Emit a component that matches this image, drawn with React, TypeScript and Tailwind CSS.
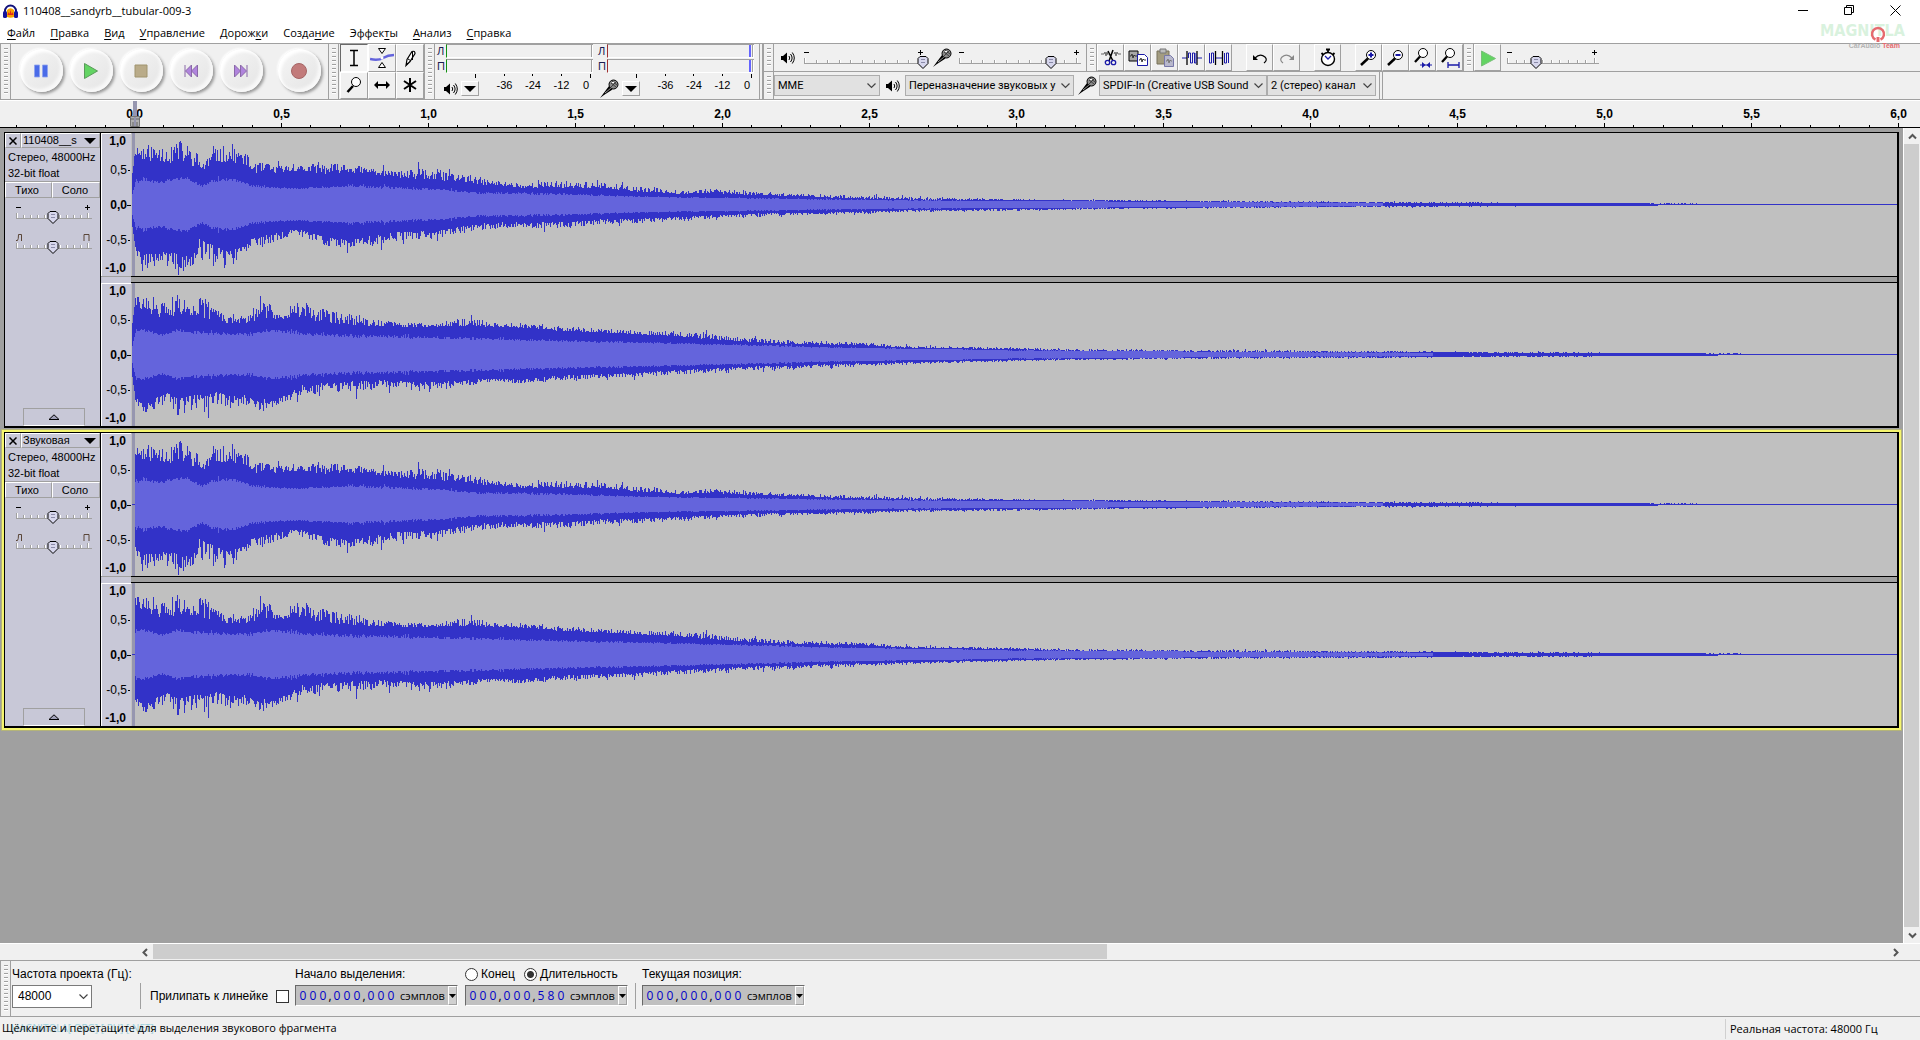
import { useState } from 'react'
import type { ReactNode } from 'react'

const UI = "font-['Open_Sans','Noto_Sans',sans-serif]"
const ARIAL = "font-['Liberation_Sans',Arial,sans-serif]"

// [x, low, high] control points, heights in px from the zero line
type Point = [number, number, number]
type Shape = { up: Point[]; down: Point[]; rms: Point[] }

const LEFT: Shape = {
  up: [
    [0, 30, 34], [3, 50, 58], [12, 42, 60], [25, 44, 60], [40, 40, 57], [45, 44, 66], [60, 38, 58], [70, 32, 46],
    [85, 42, 57], [100, 41, 60], [113, 40, 52], [120, 31, 43], [145, 31, 39], [165, 33, 39], [190, 30, 42],
    [215, 32, 40], [245, 29, 36], [270, 26, 32], [290, 24, 37], [320, 23, 33], [355, 19, 25], [390, 16, 21],
    [430, 16, 24], [470, 15, 21], [510, 12, 17], [550, 10, 14], [580, 11, 15], [620, 9, 13], [650, 8, 11],
    [700, 6, 9], [780, 4, 7], [870, 4, 5], [1000, 3, 4], [1130, 2, 3], [1280, 1, 2], [1460, 1, 1], [1500, 1, 1],
    [1530, 0, 1], [1565, 0, 1], [1566, 0, 0], [1766, 0, 0],
  ],
  down: [
    [0, 22, 24], [3, 42, 45], [10, 49, 67], [30, 46, 58], [42, 48, 68], [50, 50, 66], [60, 52, 66], [67, 33, 56],
    [80, 40, 56], [95, 46, 66], [105, 44, 56], [112, 40, 48], [120, 32, 40], [130, 29, 42], [145, 27, 36],
    [163, 24, 29], [180, 28, 36], [200, 33, 43], [220, 35, 43], [240, 30, 41], [265, 27, 36], [300, 26, 34],
    [320, 23, 30], [350, 18, 25], [380, 17, 23], [430, 17, 24], [470, 14, 19], [520, 13, 18], [580, 10, 14],
    [640, 8, 12], [700, 7, 10], [780, 5, 7], [870, 4, 6], [1000, 3, 4], [1130, 2, 3], [1280, 1, 2], [1460, 1, 1],
    [1510, 1, 1], [1540, 0, 0], [1766, 0, 0],
  ],
  rms: [
    [0, 10, 11], [3, 20, 24], [10, 23, 27], [30, 20, 23], [42, 24, 27], [55, 24, 27], [69, 17, 19], [82, 22, 25],
    [95, 23, 27], [105, 22, 25], [120, 17, 20], [150, 15, 17], [165, 15, 16], [190, 16, 18], [215, 17, 20],
    [250, 15, 18], [300, 14, 16], [350, 10, 12], [430, 9, 11], [500, 7, 8], [560, 6, 7], [640, 5, 6], [700, 4, 5],
    [800, 3, 4], [900, 3, 3], [1050, 2, 2], [1180, 1, 2], [1290, 0, 1], [1350, 0, 0], [1766, 0, 0],
  ],
}

const RIGHT: Shape = {
  up: [
    [0, 30, 34], [3, 48, 58], [12, 43, 58], [25, 37, 50], [45, 38, 60], [55, 39, 54], [70, 36, 58], [85, 33, 50],
    [95, 31, 42], [115, 31, 37], [130, 36, 53], [150, 35, 48], [165, 37, 52], [185, 33, 47], [210, 29, 42],
    [235, 28, 36], [270, 27, 32], [300, 27, 31], [330, 28, 36], [360, 27, 33], [400, 25, 30], [430, 23, 28],
    [480, 21, 25], [550, 17, 23], [600, 13, 18], [650, 10, 14], [700, 9, 13], [740, 8, 11], [780, 6, 8],
    [870, 5, 7], [950, 3, 5], [1100, 2, 4], [1250, 2, 3], [1400, 1, 2], [1560, 1, 1], [1585, 0, 1], [1615, 0, 1],
    [1616, 0, 0], [1766, 0, 0],
  ],
  down: [
    [0, 22, 24], [3, 42, 46], [12, 50, 68], [25, 42, 54], [35, 38, 48], [45, 44, 60], [60, 40, 56], [75, 40, 58],
    [85, 36, 50], [100, 40, 52], [115, 40, 50], [130, 43, 58], [145, 44, 53], [160, 36, 46], [170, 30, 40],
    [190, 28, 38], [220, 26, 38], [250, 25, 33], [290, 27, 36], [310, 26, 34], [350, 24, 29], [400, 23, 28],
    [430, 20, 27], [480, 19, 23], [530, 16, 21], [600, 12, 16], [700, 9, 13], [780, 7, 9], [870, 5, 7],
    [950, 4, 5], [1100, 2, 4], [1250, 2, 3], [1400, 1, 2], [1560, 1, 1], [1610, 0, 0], [1766, 0, 0],
  ],
  rms: [
    [0, 8, 10], [3, 20, 23], [10, 23, 26], [30, 18, 20], [45, 23, 25], [60, 20, 23], [120, 18, 21], [135, 22, 25],
    [160, 20, 24], [180, 18, 21], [230, 16, 20], [300, 15, 18], [400, 13, 15], [480, 11, 13], [550, 10, 11],
    [650, 7, 9], [700, 6, 7], [800, 5, 5], [900, 3, 4], [1000, 3, 3], [1100, 2, 2], [1250, 1, 2], [1350, 0, 1],
    [1420, 0, 0], [1766, 0, 0],
  ],
}

const WAVE_W = 1766
const WAVE_H = 143
const MID = 71

function makeRandom(seed: number) {
  let s = seed
  return () => {
    s = (s * 1664525 + 1013904223) % 4294967296
    return s / 4294967296
  }
}

function sample(points: Point[], seed: number) {
  const rnd = makeRandom(seed)
  const out: number[] = []
  let i = 0
  for (let x = 0; x < WAVE_W; x++) {
    while (i < points.length - 2 && points[i + 1][0] <= x) i++
    const [x0, l0, h0] = points[i]
    const [x1, l1, h1] = points[i + 1]
    const t = (x - x0) / (x1 - x0)
    const low = l0 + (l1 - l0) * t
    const high = h0 + (h1 - h0) * t
    const r = rnd()
    const spike = rnd() > 0.95 ? (high - low) * 0.6 : 0
    out.push(Math.min(MID, Math.round(low + (high - low) * Math.pow(r, 1.4) + spike)))
  }
  return out
}

function bars(up: number[], down: number[], from: number, to: number) {
  let d = ''
  for (let x = from; x < to; x++) d += `M${x} ${MID - up[x]}h1v${up[x] + down[x] + 1}h-1z`
  return d
}

function Wave({ shape, seed, from = 0 }: { shape: Shape; seed: number; from?: number }) {
  const up = sample(shape.up, seed)
  const down = sample(shape.down, seed + 7)
  const rms = sample(shape.rms, seed + 13)
  const rmsEnd = rms.findIndex((v, x) => x > 1200 && v === 0)
  return (
    <svg
      viewBox={`-1 0 ${WAVE_W} ${WAVE_H}`}
      preserveAspectRatio="none"
      shapeRendering="crispEdges"
      className="block h-[143px] w-full bg-[#c0c0c0]"
    >
      <rect x="0" y="0" width="3" height={WAVE_H} fill="#9696af" />
      <rect x="0" y={MID} width={WAVE_W} height="1" fill="#3232c8" />
      <path d={bars(up, down, from, WAVE_W)} fill="#3232c8" />
      <path d={bars(rms, rms, from, rmsEnd)} fill="#6464dc" />
    </svg>
  )
}

/* ---------- small shared pieces ---------- */

function Grip() {
  return (
    <div className="flex w-[11px] shrink-0 items-stretch justify-center border-r border-l border-[#a0a0a0] bg-[#f0f0f0] py-1">
      <div className="w-1 bg-[repeating-linear-gradient(to_bottom,#a0a0a0_0,#a0a0a0_1px,#fff_1px,#fff_2px,transparent_2px,transparent_4px)]" />
    </div>
  )
}

function Speaker() {
  return (
    <svg width="14" height="12" viewBox="0 0 14 12" className="shrink-0">
      <path d="M0 4h2l4-3.5v11L2 8H0z" fill="#000" />
      <path d="M8 4q1.5 2 0 4M9.5 2q3.2 4 0 8M11.3 .5q4 5.5 0 11" fill="none" stroke="#000" />
    </svg>
  )
}

function Mic() {
  return (
    <svg width="20" height="20" viewBox="0 0 20 20" className="shrink-0">
      <path d="M1 19L10 7l3.5 3.500L5 16z" fill="#000" />
      <path d="M6 14l6-5" stroke="#999" />
      <circle cx="14.5" cy="5.5" r="4.5" fill="#8a8a8a" stroke="#000" />
      <path d="M12 4l5 4M13 2l5 4M12 8l5-5" stroke="#222" strokeWidth=".7" />
      <path d="M13 3.5h2" stroke="#fff" />
    </svg>
  )
}

type SliderProps = { label: string; width: number; at: number; ends?: 'gain' | 'pan'; ticks?: number }

function Slider({ label, width, at, ends = 'gain', ticks = 10 }: SliderProps) {
  const step = (width - 5) / ticks
  return (
    <div className="relative shrink-0" style={{ width }}>
      <svg width={width} height="22" className="block overflow-visible">
        {ends === 'gain' ? (
          <path d={`M0 5.5h5M${width - 7} 5.5h5M${width - 4.5} 3v5`} stroke="#000" fill="none" />
        ) : (
          <>
            <path d="M0 8.500h1.500q1-1 1-6h3V9" stroke="#5a4638" fill="none" />
            <path d={`M${width - 8} 9V2.5h5V9`} stroke="#5a4638" fill="none" />
          </>
        )}
        <path d={`M0 16.5h${width}`} stroke="#a0a0a0" />
        {Array.from({ length: ticks + 1 }, (_, i) => {
          const x = Math.round(i * step) + 0.5
          const y = i === 0 || i === ticks ? 11 : 13
          return (
            <g key={i}>
              <path d={`M${x} ${y}V16`} stroke="#a0a0a0" />
              <path d={`M${x + 1} ${y}V16`} stroke="#fff" />
            </g>
          )
        })}
        <path d={`M${at - 3} 9.5h6l2 2v5l-5 5l-5-5v-5z`} fill="#d6d6ec" stroke="#000" strokeLinejoin="round" />
        <path d={`M${at - 2} 12.5h4M${at - 2} 15.5h4`} stroke="#8a8aa8" />
      </svg>
      <input
        type="range"
        aria-label={label}
        min={0}
        max={width}
        defaultValue={at}
        className="absolute inset-0 h-full w-full opacity-0"
      />
    </div>
  )
}

function Combo({ label, value, className }: { label: string; value: string; className: string }) {
  return (
    <div className={`relative shrink-0 ${className}`}>
      <select
        aria-label={label}
        className="block h-full w-full appearance-none overflow-hidden border border-[#adadad] bg-[#e1e1e1] pr-4 pl-[3px] text-[11px] leading-[18px] text-black font-['Roboto','Noto_Sans',sans-serif]"
      >
        <option>{value}</option>
      </select>
      <svg width="9" height="6" viewBox="0 0 9 6" className="pointer-events-none absolute top-2 right-1">
        <path d="M.5 .5l4 4l4-4" fill="none" stroke="#444" strokeWidth="1.2" />
      </svg>
    </div>
  )
}

/* ---------- title and menu ---------- */

const MENU: [string, string, string][] = [
  ['', 'Ф', 'айл'],
  ['', 'П', 'равка'],
  ['', 'В', 'ид'],
  ['', 'У', 'правление'],
  ['Дорож', 'к', 'и'],
  ['Созда', 'н', 'ие'],
  ['Эффек', 'т', 'ы'],
  ['', 'А', 'нализ'],
  ['', 'С', 'правка'],
]

function TitleBar() {
  return (
    <header className="flex h-[22px] items-center bg-white pl-[3px]">
      <svg width="15" height="15" viewBox="0 0 15 15">
        <path d="M2 9V7a5.5 5.5 0 0 1 11 0v2" fill="none" stroke="#10107a" strokeWidth="2" />
        <path d="M4 13V6q3.500-3.500 7 0v7q-3.500 1.500-7 0z" fill="#f5a200" />
        <path d="M4.500 11l1-3 1 2 1-4 1 4 1-2 1 3z" fill="#e5281a" />
        <rect x="0" y="7" width="4" height="7" rx="1.5" fill="#14149c" />
        <rect x="11" y="7" width="4" height="7" rx="1.5" fill="#14149c" />
      </svg>
      <h1 className="ml-[5px] text-[11px]">110408__sandyrb__tubular-009-3</h1>
      <div className="mr-[2px] ml-auto flex h-5 self-start">
        <button aria-label="Свернуть" className="flex w-[46px] items-center justify-center">
          <svg width="11" height="11"><path d="M0 5.5h10" stroke="#000" /></svg>
        </button>
        <button aria-label="Восстановить" className="flex w-[46px] items-center justify-center">
          <svg width="11" height="11" fill="none" stroke="#000"><path d="M.5 2.5h7v7h-7zM2.5 2.5v-2h7v7h-2" /></svg>
        </button>
        <button aria-label="Закрыть" className="flex w-[46px] items-center justify-center">
          <svg width="11" height="11"><path d="M.5 .5l10 10M10.5 .5l-10 10" stroke="#000" /></svg>
        </button>
      </div>
    </header>
  )
}

function MenuBar() {
  return (
    <nav className="flex h-[21px] items-center gap-px bg-white">
      {MENU.map(([a, u, b]) => (
        <button key={a + u + b} className="px-[7px] text-[11px] leading-4">
          {a}
          <span className="underline underline-offset-2">{u}</span>
          {b}
        </button>
      ))}
    </nav>
  )
}

// Forum stamp laid over the top right corner
function Stamp() {
  return (
    <div className="pointer-events-none absolute top-5 right-5 w-[80px]">
      <div className="flex h-[22px] justify-between text-[16px] leading-[22px] font-bold text-[#d9f2de] font-['Liberation_Sans_Narrow','DejaVu_Sans_Condensed',sans-serif]">
        <span>MAGNIT</span>
        <span>LA</span>
      </div>
      <svg width="16" height="17" viewBox="0 0 16 17" className="absolute top-[6px] left-[50px]">
        <path d="M5.500 13.500a6 6 0 1 1 5 0" fill="none" stroke="#e66a6e" strokeWidth="2.5" />
        <path d="M8 11v5" stroke="#e66a6e" strokeWidth="3" />
      </svg>
      <div className={`text-right text-[7px] leading-[7px] font-bold text-[#b4b4b4] ${ARIAL}`}>
        CarAudio <span className="text-[#e66a6e]">Team</span>
      </div>
    </div>
  )
}

/* ---------- toolbars ---------- */

function RoundButton({ label, children }: { label: string; children: ReactNode }) {
  return (
    <button aria-label={label} className="flex w-[50px] items-center justify-center">
      <span className="flex h-[43px] w-[43px] items-center justify-center rounded-full bg-linear-to-br from-[#f6f6f6] to-[#e4e4e4] shadow-[inset_3px_3px_3px_#fff,inset_-3px_-3px_3px_#f8f8f8,2px_2px_3px_#999,-1px_-1px_2px_#fff]">
        <svg width="16" height="16" viewBox="0 0 16 16">
          {children}
        </svg>
      </span>
    </button>
  )
}

function Transport() {
  return (
    <div className="flex w-[317px] shrink-0 pb-[2px] pl-[5px]">
      <RoundButton label="Пауза">
        <path d="M1.5 2h5v12h-5zM9.5 2h5v12h-5z" fill="#4a6be8" stroke="#8fa3ee" strokeWidth=".8" />
      </RoundButton>
      <RoundButton label="Воспроизвести">
        <path d="M1.5 .5l13 7.5-13 7.5z" fill="#63d463" stroke="#5a9a5a" />
      </RoundButton>
      <RoundButton label="Остановить">
        <path d="M2 2h12v12H2z" fill="#b9ab89" stroke="#a0946f" />
      </RoundButton>
      <RoundButton label="К началу">
        <path d="M2 2v12M8.500 2v12L2.500 8zM14.500 2v12L8.500 8z" fill="#b084dd" stroke="#8a68a8" />
      </RoundButton>
      <RoundButton label="К концу">
        <path d="M1.500 2v12l6-6zM7.500 2v12l6-6zM14 2v12" fill="#b084dd" stroke="#8a68a8" />
      </RoundButton>
      <div className="ml-2 flex">
        <RoundButton label="Записать">
          <circle cx="8" cy="8" r="7.5" fill="#c27b7b" stroke="#a56565" />
        </RoundButton>
      </div>
    </div>
  )
}

function Tool({ label, active = false, children }: { label: string; active?: boolean; children: ReactNode }) {
  return (
    <button
      aria-label={label}
      aria-pressed={active}
      className={`flex items-center justify-center border ${
        active
          ? 'border-[#696969] border-r-white border-b-white bg-[#f4f4f4]'
          : 'border-white border-r-[#a0a0a0] border-b-[#a0a0a0]'
      }`}
    >
      <svg width="24" height="20" viewBox="0 0 24 20" fill="none">
        {children}
      </svg>
    </button>
  )
}

function Tools() {
  return (
    <div className="ml-px grid w-[84px] shrink-0 grid-cols-3 grid-rows-2">
      <Tool label="Выделение" active>
        <path d="M8 2.5h8M8 17.5h8M12 2.5v15" stroke="#000" strokeWidth="1.5" />
      </Tool>
      <Tool label="Огибающая">
        <path d="M0 11q8 2 13-1t11-3" stroke="#6464dc" strokeWidth="2.5" />
        <path d="M8.5 .5h7L12 5.5zM8.5 19.5h7L12 14.5z" fill="#fff" stroke="#000" />
        <circle cx="12" cy="10" r="1.5" fill="#fff" />
      </Tool>
      <Tool label="Рисование">
        <path d="M8 17.5l1-6 5-8q3-1 3 2l-5 8z" fill="#fff" stroke="#000" strokeWidth="1.2" />
        <path d="M10 11l2.500 1.500M14.500 4v8" stroke="#000" />
        <path d="M8 17.500l.5-3 2 1z" fill="#000" />
      </Tool>
      <Tool label="Масштаб">
        <circle cx="14" cy="7" r="4.5" fill="#fff" stroke="#000" />
        <path d="M11 11l-5.5 6" stroke="#000" strokeWidth="2.5" />
      </Tool>
      <Tool label="Перемещение">
        <path d="M5 10h14" stroke="#000" strokeWidth="2" />
        <path d="M4 10l4-4v8zM20 10l-4-4v8z" fill="#000" />
      </Tool>
      <Tool label="Универсальный">
        <path d="M12 3v14M6 6l12 8M18 6L6 14" stroke="#000" strokeWidth="2" />
      </Tool>
    </div>
  )
}

function Meter({ kind }: { kind: 'play' | 'rec' }) {
  const rec = kind === 'rec'
  return (
    <div className={`w-[161px] shrink-0 text-[11px] ${ARIAL}`}>
      {['Л', 'П'].map((ch) => (
        <div key={ch} className="mb-px flex h-[14px] items-center">
          <span className="w-[11px] pl-[2px] leading-[14px] text-[#1c1c50]">{ch}</span>
          <div
            className={`flex h-[14px] w-[147px] justify-end border-t border-b border-l border-t-[#a0a0a0] border-b-white ${
              rec ? 'border-l-[#a03030]' : 'border-l-[#109010]'
            }`}
          >
            {rec && <div className="w-[2px] bg-[#6464ff]" />}
            <div className="ml-px w-[2px] border-l border-[#a0a0a0] bg-white" />
          </div>
        </div>
      ))}
      <svg width="161" height="4" className="block">
        <path d="M40.5 0v4M69.5 0v2M97.5 0v2M126.5 0v2M155.5 0v4" stroke="#000" />
      </svg>
      <div className="flex h-[21px] items-center">
        <div className="flex w-[26px] justify-end pr-[3px]">{rec ? <Mic /> : <Speaker />}</div>
        <button
          aria-label={rec ? 'Меню индикатора записи' : 'Меню индикатора воспроизведения'}
          className="flex h-[15px] w-[18px] items-center justify-center border border-white border-r-[#a0a0a0] border-b-[#a0a0a0]"
        >
          <svg width="12" height="6"><path d="M0 0h12L6 6z" fill="#000" /></svg>
        </button>
        <div className="flex self-start pl-[11px] leading-[14px]">
          <span className="w-[29px] text-center">-36</span>
          <span className="w-[28px] text-center">-24</span>
          <span className="w-[29px] text-center">-12</span>
          <span className="w-[20px] text-center">0</span>
        </div>
      </div>
    </div>
  )
}

function EditButton({ label, children }: { label: string; children: ReactNode }) {
  return (
    <button
      aria-label={label}
      className="flex h-[27px] w-[27px] shrink-0 items-center justify-center border border-white border-r-[#a0a0a0] border-b-[#a0a0a0]"
    >
      <svg width="20" height="20" viewBox="0 0 20 20" fill="none">
        {children}
      </svg>
    </button>
  )
}

function Lens({ children }: { children: ReactNode }) {
  return (
    <>
      <circle cx="12" cy="7" r="4.5" fill="#fff" stroke="#000" />
      <path d="M9 10.500L2 17" stroke="#000" strokeWidth="2.5" />
      {children}
    </>
  )
}

function EditBar() {
  return (
    <div className="flex shrink-0 gap-[14px]">
      <div className="flex">
        <EditButton label="Вырезать">
          <path d="M0 6h3l1-2 1 4 1-4 1 3M13 6l1-2 1 4 1-4 1 2h3" stroke="#666" />
          <path d="M7 3l5 10M12 2L8 13" stroke="#000" strokeWidth="1.5" />
          <circle cx="6.5" cy="14.5" r="2.2" stroke="#1a1aa8" strokeWidth="1.3" />
          <circle cx="12.5" cy="14.5" r="2.2" stroke="#1a1aa8" strokeWidth="1.3" />
        </EditButton>
        <EditButton label="Копировать">
          <path d="M1 3h9v10H1z" fill="#a8a8a8" stroke="#000" />
          <path d="M2 8h1l1-2 1 4 1-3 1 1h3" stroke="#333" />
          <path d="M9.5 6.5h7l3 3v8h-10z" fill="#fff" stroke="#1a1aa8" />
          <path d="M11 12h1l1-2 1 4 1-3 1 1h2" stroke="#333" />
        </EditButton>
        <EditButton label="Вставить">
          <path d="M2 3h12v13H2z" fill="#a39c80" stroke="#77715a" />
          <path d="M5 1h6v4H5z" fill="#bbb" stroke="#777" />
          <path d="M9.5 7.5h6l3 3v8h-9z" fill="#b8b8cc" stroke="#7777a8" />
          <path d="M11 13h1l1-2 1 4 1-3 1 1h1" stroke="#777" />
        </EditButton>
        <EditButton label="Обрезать по краям">
          <path d="M0 10h5M15 10h5" stroke="#1a1aa8" />
          <path d="M5 3v14M15 3v14" stroke="#000" strokeWidth="1.3" />
          <path d="M6.500 10V5h2v10h2V5h2v10h1.500V5" stroke="#1a1aa8" />
        </EditButton>
        <EditButton label="Заполнить тишиной">
          <path d="M.5 5v10h2V5h2v10M15.500 5v10h2V5h2v10" stroke="#1a1aa8" />
          <path d="M6 10h8" stroke="#1a1aa8" />
          <path d="M6.500 3v14M13.500 3v14" stroke="#000" strokeWidth="1.3" />
        </EditButton>
      </div>
      <div className="flex">
        <EditButton label="Отменить">
          <path d="M5 10q5-5 10-1 3 3-1 6" stroke="#000" strokeWidth="1.2" />
          <path d="M3 7v5h5z" fill="#000" />
        </EditButton>
        <EditButton label="Вернуть">
          <path d="M15 10q-5-5-10-1-3 3 1 6" stroke="#888" strokeWidth="1.2" />
          <path d="M17 7v5h-5z" fill="#888" />
        </EditButton>
      </div>
      <EditButton label="Синхронизация дорожек">
        <circle cx="10" cy="11" r="6.5" fill="#fff" stroke="#000" strokeWidth="1.4" />
        <path d="M8 1.500h4M10 1.500V4M3.500 5l2 2M16.500 5l-2 2" stroke="#000" strokeWidth="1.8" />
        <path d="M7 8l3 3 3-3" stroke="#1a1aa8" strokeWidth="1.3" />
      </EditButton>
      <div className="flex">
        <EditButton label="Приблизить">
          <Lens><path d="M9.500 7h5M12 4.500v5" stroke="#1a1aa8" strokeWidth="2" /></Lens>
        </EditButton>
        <EditButton label="Отдалить">
          <Lens><path d="M9.500 7h5" stroke="#1a1aa8" strokeWidth="2" /></Lens>
        </EditButton>
        <EditButton label="Уместить выделение">
          <circle cx="10" cy="5" r="4.5" fill="#fff" stroke="#000" />
          <path d="M7 8.500L2 14" stroke="#000" strokeWidth="2.3" />
          <path d="M7 17h12" stroke="#1a1aa8" />
          <path d="M12.500 17L9 14v6zM13.500 17l3.500-3v6z" fill="#1a1aa8" />
        </EditButton>
        <EditButton label="Уместить проект">
          <circle cx="10" cy="5" r="4.5" fill="#fff" stroke="#000" />
          <path d="M7 8.500L2 14" stroke="#000" strokeWidth="2.3" />
          <path d="M8 17h11M8 14v6M19 14v6" stroke="#1a1aa8" strokeWidth="1.3" />
        </EditButton>
      </div>
    </div>
  )
}

function Toolbars() {
  return (
    <div className="flex h-[57px] overflow-hidden border-t border-b border-[#a0a0a0] bg-[#f0f0f0]">
      <Grip />
      <Transport />
      <Grip />
      <Tools />
      <Grip />
      <Meter kind="play" />
      <Meter kind="rec" />
      <div className="ml-[2px] w-[4px] border-r border-l border-[#a0a0a0]" />
      <div className="flex min-w-0 flex-1 flex-col">
        <div className="flex h-[28px] border-b border-[#a0a0a0]">
          <Grip />
          <div className="flex w-[312px] shrink-0 items-center pl-[7px]">
            <Speaker />
            <div className="ml-[9px]"><Slider label="Громкость воспроизведения" width={121} at={119} /></div>
            <div className="ml-[7px]"><Mic /></div>
            <div className="ml-[7px]"><Slider label="Громкость записи" width={122} at={92} /></div>
          </div>
          <Grip />
          <EditBar />
          <Grip />
          <EditButton label="Воспроизвести на скорости">
            <path d="M3.500 3l14 7.500-14 7.500z" fill="#63d463" stroke="#7ac07a" />
          </EditButton>
          <div className="flex items-center pl-[6px]">
            <Slider label="Скорость воспроизведения" width={92} at={29} />
          </div>
        </div>
        <div className="flex flex-1">
          <Grip />
          <div className="flex items-center border-r border-[#a0a0a0] pr-[3px]">
            <Combo label="Звуковой интерфейс" value="MME" className="h-[21px] w-[106px]" />
            <div className="flex w-[25px] justify-center"><Speaker /></div>
            <Combo label="Устройство воспроизведения" value="Переназначение звуковых у" className="h-[21px] w-[169px]" />
            <div className="flex w-[25px] justify-center"><Mic /></div>
            <Combo label="Устройство записи" value="SPDIF-In (Creative USB Sound" className="h-[21px] w-[168px]" />
            <Combo label="Каналы записи" value="2 (стерео) канал" className="h-[21px] w-[109px]" />
          </div>
          <div className="w-[3px] border-r border-[#a0a0a0]" />
        </div>
      </div>
    </div>
  )
}

/* ---------- timeline ---------- */

const SECONDS = ['', '0,0', '0,5', '1,0', '1,5', '2,0', '2,5', '3,0', '3,5', '4,0', '4,5', '5,0', '5,5', '6,0']

function Timeline() {
  return (
    <div className="relative h-[28px] overflow-hidden border-b border-black bg-[#f0f0f0]">
      <div className="-ml-[86px] flex border-t border-white">
        {SECONDS.map((s) => (
          <div key={s} className={`flex h-[26px] w-[147px] shrink-0 flex-col justify-between text-center text-[12px] font-bold ${ARIAL}`}>
            <span className="pt-[5px] leading-4">{s}</span>
            <svg width="147" height="5" className="block">
              <path d="M14.5 3v2M44.5 3v2M73.5 1v4M102.5 3v2M132.5 3v2" stroke="#000" />
            </svg>
          </div>
        ))}
      </div>
      <svg width="10" height="26" viewBox="0 0 10 26" className="absolute top-px left-[130px]">
        <path d="M3 0h4v15H3z" fill="#9696af" />
        <path d="M.5 15.500h9v10h-9z" fill="#b0b0b0" stroke="#777" />
        <path d="M0 18h10M3 21v5M7 21v5" stroke="#666" />
        <path d="M4 16h2v9H4z" fill="#9696af" />
      </svg>
    </div>
  )
}

/* ---------- tracks ---------- */

function Mark({ text, major = false }: { text: string; major?: boolean }) {
  return (
    <div className="flex h-[35px] items-center justify-end">
      <span className={major ? 'font-bold' : ''}>{text}</span>
      <div className={major ? 'h-px w-[4px] bg-black' : 'mr-px ml-px h-px w-[2px] bg-black'} />
    </div>
  )
}

function VerticalRuler() {
  return (
    <div className={`flex h-[143px] w-[30px] flex-col justify-between border-t border-l border-white bg-[#c8c8d7] text-[12px] leading-[15px] ${ARIAL}`}>
      <div className="pr-[5px] text-right font-bold">1,0</div>
      <div>
        <Mark text="0,5" />
        <Mark text="0,0" major />
        <Mark text="-0,5" />
      </div>
      <div className="pr-[5px] text-right font-bold">-1,0</div>
    </div>
  )
}

const bevel = 'border border-white border-r-[#a0a0a0] border-b-[#a0a0a0]'

function TrackPanel({ name }: { name: string }) {
  return (
    <div className={`flex w-[96px] shrink-0 flex-col border-r border-black bg-[#c8c8d7] text-[11px] ${ARIAL}`}>
      <div className="flex h-[15px]">
        <button aria-label={`Закрыть ${name}`} className={`flex w-[16px] items-center justify-center ${bevel}`}>
          <svg width="8" height="8"><path d="M.5 .5l7 7M7.5 .5l-7 7" stroke="#000" strokeWidth="1.5" /></svg>
        </button>
        <button className={`flex flex-1 items-center justify-between pr-[3px] pl-px leading-[13px] ${bevel}`}>
          {name}
          <svg width="12" height="6"><path d="M0 0h12L6 6z" fill="#000" /></svg>
        </button>
      </div>
      <div className="border-b border-[#a0a0a0] pt-px pl-[3px] leading-4 whitespace-nowrap">
        <div>Стерео, 48000Hz</div>
        <div>32-bit float</div>
      </div>
      <div className="flex h-[16px] leading-[14px]">
        <button className={`w-[47px] pr-[3px] ${bevel}`}>Тихо</button>
        <button className={`flex-1 pr-[2px] ${bevel}`}>Соло</button>
      </div>
      <div className="flex flex-col gap-2 pt-[4px] pl-[11px]">
        <Slider label={`Усиление ${name}`} width={76} at={37} />
        <Slider label={`Баланс ${name}`} width={76} at={37} ends="pan" />
      </div>
      <button
        aria-label={`Свернуть ${name}`}
        className="mt-auto ml-[18px] flex h-[18px] w-[62px] items-center justify-center border border-[#a0a0a0] border-b-white"
      >
        <svg width="12" height="6"><path d="M1 5.500h10L6 .8z" fill="#a0a0b8" stroke="#000" /></svg>
      </button>
    </div>
  )
}

function Track({ name, selected = false }: { name: string; selected?: boolean }) {
  const from = selected ? 3 : 0
  return (
    <section
      className={`mr-px ml-px h-[302px] border-[3px] ${
        selected ? 'border-[#f5f56e] outline-1 -outline-offset-1 outline-[#b4b478]' : 'border-transparent'
      }`}
    >
      <div className="flex h-[296px] border-t border-r-2 border-b-2 border-l border-black">
        <TrackPanel name={name} />
        <div className="flex shrink-0 flex-col bg-[#c8c8d7]">
          <VerticalRuler />
          <div className="h-[7px] border-t border-[#a0a0a0]" />
          <VerticalRuler />
        </div>
        <div className="min-w-0 flex-1">
          <Wave shape={LEFT} seed={11} from={from} />
          <div className="h-[7px] border-t border-b border-black bg-[#a0a0a0]" />
          <Wave shape={RIGHT} seed={29} from={from} />
        </div>
      </div>
    </section>
  )
}

function ScrollButton({ label, d }: { label: string; d: string }) {
  return (
    <button aria-label={label} className="flex h-[16px] w-[16px] shrink-0 items-center justify-center">
      <svg width="9" height="9" viewBox="0 0 9 9"><path d={d} fill="none" stroke="#555" strokeWidth="2" /></svg>
    </button>
  )
}

function Workspace() {
  return (
    <main className="flex flex-1 flex-col">
      <div className="flex flex-1">
        <div className="min-w-0 flex-1 bg-[#a0a0a0] pt-px">
          <div className="-mb-[2px]"><Track name="110408__s" /></div>
          <Track name="Звуковая" selected />
        </div>
        <div className="flex w-[17px] shrink-0 flex-col border-l border-white bg-[#f0f0f0]">
          <ScrollButton label="Вверх" d="M1 6.500l3.500-3.500L8 6.500" />
          <div className="mr-px flex-1 bg-[#cdcdcd]" />
          <ScrollButton label="Вниз" d="M1 2.500L4.500 6 8 2.500" />
        </div>
      </div>
      <div className="flex h-[17px] border-t border-white bg-[#f0f0f0] pr-[17px] pl-[137px]">
        <ScrollButton label="Влево" d="M6 1L2.500 4.500 6 8" />
        <div className="flex-1"><div className="h-[15px] w-[55%] bg-[#cdcdcd]" /></div>
        <ScrollButton label="Вправо" d="M3 1l3.500 3.500L3 8" />
      </div>
    </main>
  )
}

/* ---------- selection bar ---------- */

function TimeBox({ label, value }: { label: string; value: string }) {
  return (
    <div
      role="group"
      aria-label={label}
      className={`flex h-[21px] w-[163px] items-center border border-[#696969] border-r-white border-b-white bg-[#c0c0c0] pl-[2px] text-[12px] ${UI}`}
    >
      {value.split('').map((c, i) => (
        <span key={i} className={c === ',' ? 'w-[4px] text-center' : 'w-[10px] text-center text-[#0000c8]'}>
          {c}
        </span>
      ))}
      <span className="ml-[4px] flex-1 text-[11px]">сэмплов</span>
      <button aria-label={`Формат: ${label}`} className={`flex h-full w-[9px] shrink-0 items-center justify-center bg-[#d0d0d0] ${bevel}`}>
        <svg width="7" height="4" className="shrink-0"><path d="M0 0h7L3.500 4z" fill="#000" /></svg>
      </button>
    </div>
  )
}

const radio =
  'h-[13px] w-[13px] appearance-none rounded-full border border-[#333] bg-white checked:bg-[radial-gradient(circle,#333_0,#333_3px,#fff_4px)]'

function SelectionBar() {
  const [mode, setMode] = useState('length')
  return (
    <div className={`flex h-[57px] border-t border-b border-[#a0a0a0] bg-[#f0f0f0] text-[12px] leading-[15px] ${ARIAL}`}>
      <Grip />
      <div className="w-[129px] pt-[6px] pl-px">
        <label htmlFor="rate" className="block whitespace-nowrap">Частота проекта (Гц):</label>
        <div className="relative mt-[3px] h-[23px] w-[80px]">
          <select id="rate" className="block h-full w-full appearance-none border border-[#7a7a7a] bg-white pl-[5px]">
            <option>48000</option>
          </select>
          <svg width="9" height="6" viewBox="0 0 9 6" className="pointer-events-none absolute top-[9px] right-1">
            <path d="M.5 .5l4 4l4-4" fill="none" stroke="#444" strokeWidth="1.2" />
          </svg>
        </div>
      </div>
      <div className="mt-[22px] h-[26px] w-px bg-[#a0a0a0]" />
      <label className="mt-[22px] flex h-[26px] w-[154px] items-center justify-between pr-[6px] pl-[9px] whitespace-nowrap">
        Прилипать к линейке
        <input type="checkbox" className="h-[13px] w-[13px] appearance-none border border-[#333] bg-white checked:bg-[#333]" />
      </label>
      <div className="w-[170px] pt-[6px]">
        <div className="mb-[3px]">Начало выделения:</div>
        <TimeBox label="Начало выделения" value="000,000,000" />
      </div>
      <div className="w-[170px] pt-[6px]">
        <div className="mb-[3px] flex items-center">
          <label className="flex w-[59px] items-center gap-[3px]">
            <input type="radio" name="end" className={radio} checked={mode === 'end'} onChange={() => setMode('end')} />
            Конец
          </label>
          <label className="flex items-center gap-[3px]">
            <input type="radio" name="end" className={radio} checked={mode === 'length'} onChange={() => setMode('length')} />
            Длительность
          </label>
        </div>
        <TimeBox label="Длительность" value="000,000,580" />
      </div>
      <div className="mt-[22px] h-[26px] w-px bg-[#a0a0a0]" />
      <div className="pt-[6px] pl-[6px]">
        <div className="mb-[3px]">Текущая позиция:</div>
        <TimeBox label="Текущая позиция" value="000,000,000" />
      </div>
    </div>
  )
}

function StatusBar() {
  return (
    <footer className="relative flex h-[23px] items-center bg-[#f0f0f0] text-[11px]">
      <div className="pointer-events-none absolute left-[10px] text-[10px] text-[#9ccfda]" aria-hidden>
        MAGNITOLA[.ORG] [.RU] [.NET]
      </div>
      <span className="relative flex-1 pl-[2px]">Щёлкните и перетащите для выделения звукового фрагмента</span>
      <span className="h-5 w-[195px] border-l border-[#d0d0d0] pl-[4px] leading-5">Реальная частота: 48000 Гц</span>
    </footer>
  )
}

export default function App() {
  return (
    <div className={`relative flex min-h-screen flex-col overflow-hidden bg-[#f0f0f0] text-black ${UI}`}>
      <TitleBar />
      <MenuBar />
      <Toolbars />
      <Timeline />
      <Workspace />
      <SelectionBar />
      <StatusBar />
      <Stamp />
    </div>
  )
}
